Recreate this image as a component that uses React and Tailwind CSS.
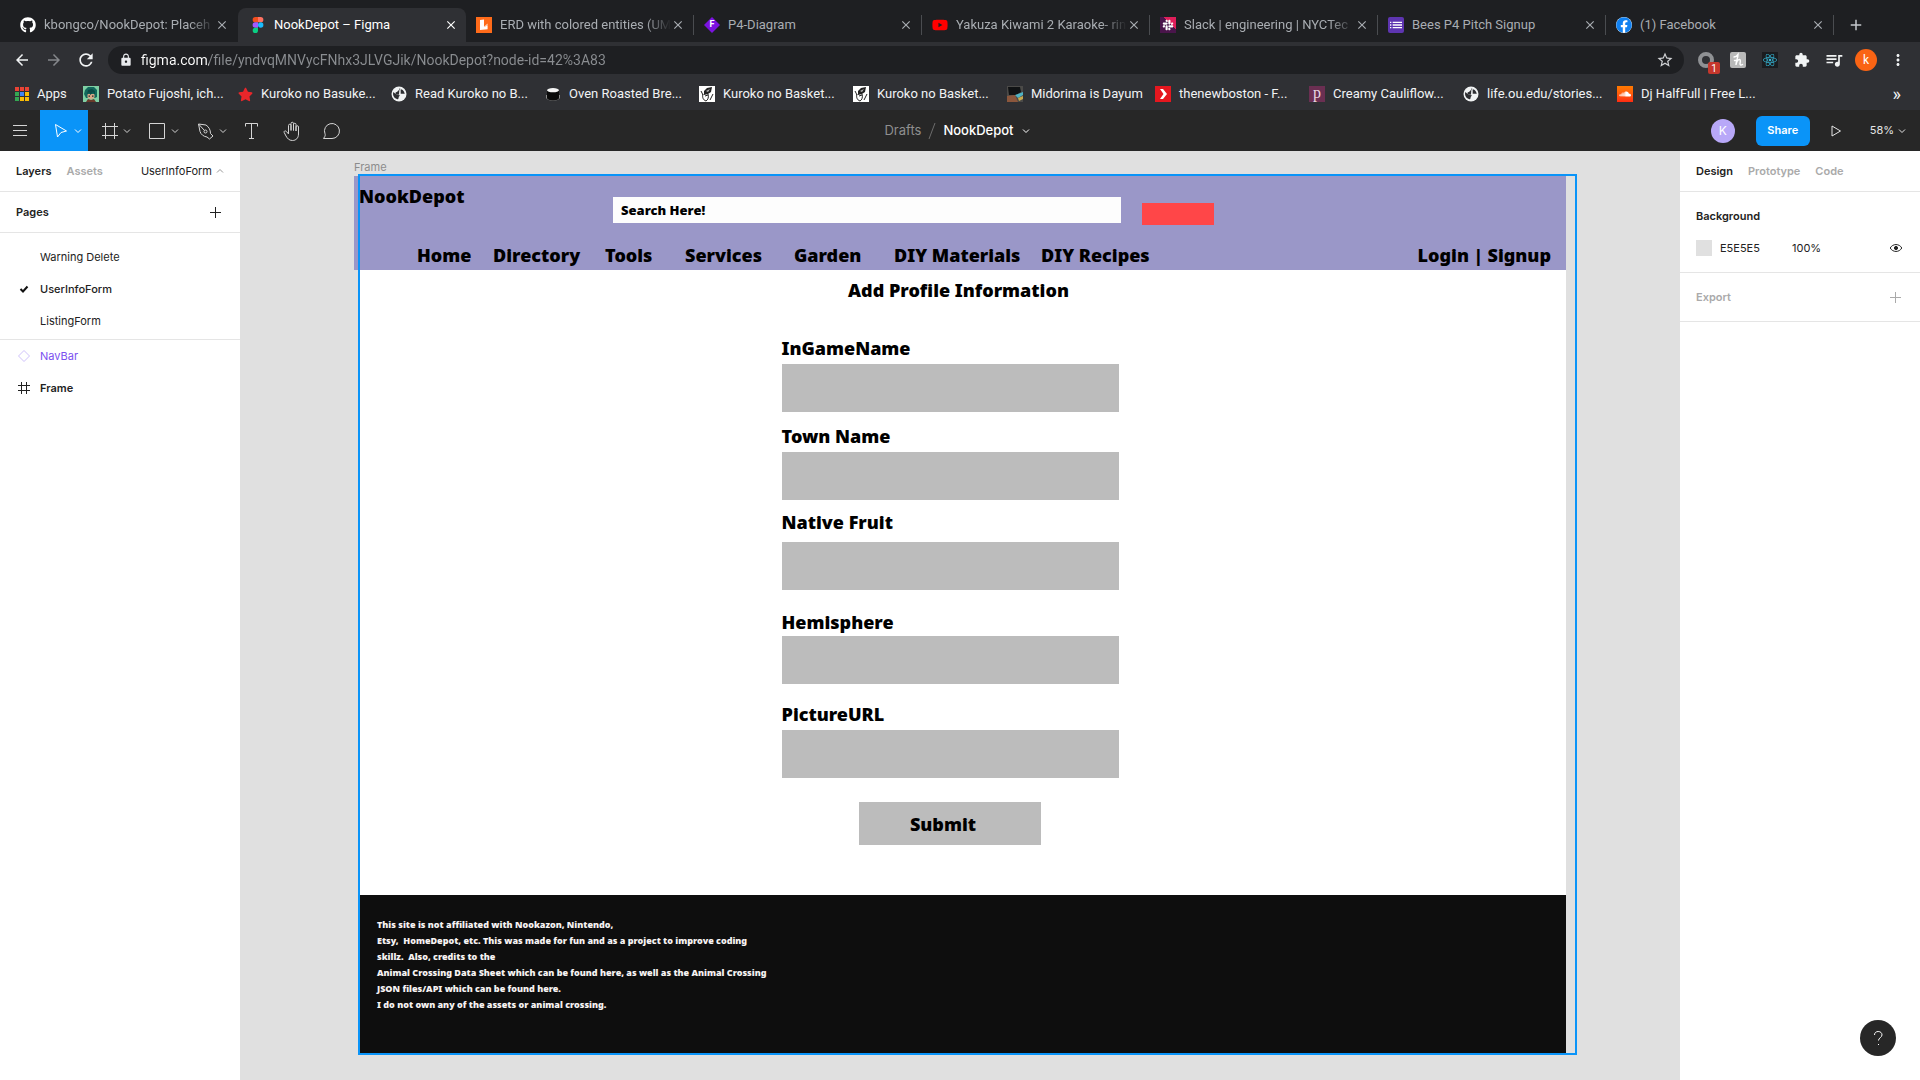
import React from "react";
import { FaGithub, FaYoutube, FaReact, FaSoundcloud, FaFacebook, FaStar, FaSlack } from "react-icons/fa";
import {
  MdArrowBack, MdArrowForward, MdRefresh, MdLock, MdStarBorder, MdExtension, MdQueueMusic,
  MdMoreVert, MdClose, MdAdd, MdList,
} from "react-icons/md";

/* ---------- favicons ---------- */

const FigmaLogo = () => (
  <svg viewBox="0 0 16 16" className="size-4">
    <path d="M5.3 0H8v5.3H5.3a2.65 2.65 0 0 1 0-5.3z" fill="#f24e1e" />
    <path d="M8 0h2.7a2.65 2.65 0 0 1 0 5.3H8z" fill="#ff7262" />
    <path d="M5.3 5.3H8v5.4H5.3a2.7 2.7 0 0 1 0-5.4z" fill="#a259ff" />
    <circle cx="10.7" cy="8" r="2.7" fill="#1abcfe" />
    <path d="M5.3 10.7H8v2.6a2.65 2.65 0 1 1-2.7-2.6z" fill="#0acf83" />
  </svg>
);

const LucidLogo = () => (
  <svg viewBox="0 0 16 16" className="size-4">
    <path d="M0 0h16v16H0z" fill="#ff6b1a" />
    <path d="M4 3l4-.4v6.8l3.6-.6v3.4L4 13z" fill="#fff" />
    <path d="M8 9.4l3.6-3v2.400z" fill="#ffd2b5" />
  </svg>
);

const DiagramLogo = () => (
  <span className="relative flex size-4 items-center justify-center">
    <svg viewBox="0 0 16 16" className="absolute inset-0">
      <path d="M8 0l8 8-8 8-8-8z" fill="#7b12e0" />
    </svg>
    <span className="relative text-[9px] font-bold text-white">F</span>
  </span>
);

const SlackLogo = () => (
  <span className="flex size-4 items-center justify-center bg-[linear-gradient(45deg,#4a154b_62%,#e01e5a_62%)]">
    <FaSlack className="size-3 text-white" />
  </span>
);

const FormsLogo = () => (
  <span className="flex size-4 items-center justify-center rounded-xs bg-[#5e35b1]">
    <MdList className="size-4 text-white" />
  </span>
);

const FacebookLogo = () => (
  <span className="flex size-4 rounded-full bg-white">
    <FaFacebook className="size-4 text-[#1080f0]" />
  </span>
);

const AppsGrid = () => {
  const colors = ["#ea4335", "#ea4335", "#ea4335", "#34a853", "#4285f4", "#fbbc04", "#34a853", "#fbbc04", "#fbbc04"];
  return (
    <svg viewBox="0 0 14 14" className="size-3.5">
      {colors.map((c, i) => (
        <rect key={i} x={(i % 3) * 5} y={Math.floor(i / 3) * 5} width="4" height="4" fill={c} />
      ))}
    </svg>
  );
};

const Globe = () => (
  <svg viewBox="0 0 16 16" className="size-4">
    <circle cx="8" cy="8" r="7.500" fill="#f1f3f4" />
    <path
      d="M8.500 2.200c1.500.3 1.200 1.600-.3 1.900-1.600.3-1 1.700-2.400 2-1.300.3-1.700 1.200-1 1.900.9.700 3-.2 3.700 1.100.5 1-.8 1.500-.9 2.600 0 .9-.4 1.700-1.100 1.600C4 12.800 2 10.600 2 8c0-.700.200-1.300.400-1.900L4.600 8c1.500.5 3.100.2 3.300 1.500M10.300 3.200c-.3 1-1.300 1.500-.6 2.300.8.700-.8 1.400 0 2 1 .700 2.300-.2 3.900.6 0-2.200-1.300-4.100-3.300-4.900z"
      fill="#2d2e32"
    />
  </svg>
);

const Anime = () => (
  <svg viewBox="0 0 16 16" className="size-4">
    <path d="M0 0h16v16H0z" fill="#7fd0a4" />
    <path d="M1 8l1-4 3-3h6l3 3v7l-2 1H3z" fill="#12695c" />
    <path d="M4.500 8h7v3.500l-3.500 2-3.500-2z" fill="#d9a988" />
    <path d="M4 9l2-3 1.500 3L10 6l2 3V5L9 3 5 4z" fill="#0c4b46" />
    <path d="M5.500 9.500h1.500v1.300H5.500zM9 9.500h1.500v1.300H9z" fill="#1c2b28" />
    <path d="M3 16l2-3 3 1 3-1 2 3z" fill="#6a3a2a" />
  </svg>
);

const Pot = () => (
  <svg viewBox="0 0 16 16" className="size-4">
    <path d="M1 9h14v2.500a7 3.200 0 0 1-14 0z" fill="#8c8c8c" />
    <path d="M2 4h12v8a6 2.500 0 0 1-12 0z" fill="#0a0a0a" />
    <ellipse cx="8" cy="4.200" rx="6" ry="2.100" fill="#f5f5f5" />
  </svg>
);

const Sketch = () => (
  <svg viewBox="0 0 16 16" className="size-4">
    <path d="M0 0h16v16H0z" fill="#fff" />
    <path d="M5 5l3-3 5-1-1 5-3 2-4 1z" fill="#222" />
    <path d="M7 5l4-2-2 3z" fill="#bbb" />
    <path d="M4 8c-1 3 0 6 3 7 2-1 3-4 2-7M6 10l3-1M2 5l2 4M14 8l-3 6" stroke="#222" strokeWidth="1" fill="none" />
  </svg>
);

const Photo = () => (
  <svg viewBox="0 0 16 16" className="size-4">
    <path d="M0 0h16v16H0z" fill="#4b4a48" />
    <path d="M1 1h12l1 5-5 3H2z" fill="#101214" />
    <path d="M0 10l8-1 3 7H0z" fill="#8b563c" />
    <path d="M8 9l8-3v3l-5 3z" fill="#4fb3c4" />
    <path d="M11 12l5-2v3l-4 2z" fill="#c7a94e" />
  </svg>
);

const Boston = () => (
  <svg viewBox="0 0 16 16" className="size-4">
    <path d="M0 0h16v16H0z" fill="#e5171f" />
    <path d="M5 3h3l4 5-4 5H5l3.500-5z" fill="#fff" />
  </svg>
);

const Pinch = () => (
  <span className="flex size-4 items-center justify-center bg-[#6b2f52] pb-0.5 font-['Liberation_Serif',serif] text-base leading-4 text-[#e9d7e2]">
    p
  </span>
);

const Cloud = () => (
  <span className="flex size-4 items-center justify-center bg-gradient-to-b from-[#ff7a00] to-[#ff2a12]">
    <FaSoundcloud className="size-3 text-white" />
  </span>
);

/* ---------- browser chrome ---------- */

const tabs = [
  { title: "kbongco/NookDepot: Placeh", icon: <FaGithub className="size-4 text-white" />, fade: true },
  { title: "NookDepot – Figma", icon: <FigmaLogo />, active: true },
  { title: "ERD with colored entities (UM", icon: <LucidLogo />, fade: true },
  { title: "P4-Diagram", icon: <DiagramLogo /> },
  { title: "Yakuza Kiwami 2 Karaoke- rin", icon: <FaYoutube className="size-4 text-[#ff0000]" />, fade: true },
  { title: "Slack | engineering | NYCTec", icon: <SlackLogo />, fade: true },
  { title: "Bees P4 Pitch Signup", icon: <FormsLogo /> },
  { title: "(1) Facebook", icon: <FacebookLogo /> },
];

function TabStrip() {
  return (
    <div className="flex h-[42px] items-end bg-[#1e1f22] pl-2.5">
      <div role="tablist" className="flex min-w-0">
        {tabs.map((t, i) => (
          <div
            key={t.title}
            role="tab"
            aria-selected={!!t.active}
            className={
              t.active
                ? "flex h-[34px] w-[228px] min-w-0 items-center rounded-t-lg bg-[#2f3034] pr-2 pl-3 text-white"
                : "flex h-[34px] w-[228px] min-w-0 items-center pl-2.5 text-[#a9adb2]"
            }
          >
            <span className="shrink-0">{t.icon}</span>
            <span
              className={
                t.fade
                  ? "ml-2 min-w-0 flex-1 overflow-hidden whitespace-nowrap [mask-image:linear-gradient(to_right,black_85%,transparent)]"
                  : "ml-2 min-w-0 flex-1 overflow-hidden whitespace-nowrap"
              }
            >
              {t.title}
            </span>
            <button aria-label="Close tab" className="shrink-0">
              <MdClose className="size-3.5" />
            </button>
            {!t.active && (
              <span className={i === 0 ? "ml-2 h-5 w-px shrink-0" : "ml-2 h-5 w-px shrink-0 bg-[#4a4c50]"} />
            )}
          </div>
        ))}
      </div>
      <button aria-label="New tab" className="flex h-[34px] w-11 items-center justify-center text-[#c4c7cb]">
        <MdAdd className="size-[18px]" />
      </button>
    </div>
  );
}

function ChromeButton({ label, children, className }) {
  return (
    <button aria-label={label} className={"relative flex w-8 shrink-0 items-center justify-center " + (className || "text-[#f1f3f4]")}>
      {children}
    </button>
  );
}

function AddressBar() {
  return (
    <div className="flex h-9 items-center bg-[#2f3034] px-1.5">
      <ChromeButton label="Back"><MdArrowBack className="size-[18px]" /></ChromeButton>
      <ChromeButton label="Forward" className="text-[#85878b]"><MdArrowForward className="size-[18px]" /></ChromeButton>
      <ChromeButton label="Reload"><MdRefresh className="size-5" /></ChromeButton>
      <div className="mx-1.5 flex h-7 min-w-0 flex-1 items-center rounded-full bg-[#1e1f22] pr-2.5 pl-[11px]">
        <MdLock className="size-3.5 shrink-0 text-[#e8eaed]" />
        <input
          aria-label="Address"
          defaultValue="figma.com/file/yndvqMNVycFNhx3JLVGJik/NookDepot?node-id=42%3A83"
          className="ml-2 min-w-0 flex-1 bg-[linear-gradient(to_right,#ffffff_68px,#8a8d91_68px)] bg-clip-text text-sm text-transparent outline-none"
        />
        <button aria-label="Bookmark this tab" className="text-[#d0d2d5]"><MdStarBorder className="size-[18px]" /></button>
      </div>
      <ChromeButton label="Blocker">
        <span className="size-4 rounded-full border-4 border-[#8f9194]" />
        <span className="absolute top-2.5 left-[18px] flex h-3 w-3 items-center justify-center rounded-xs bg-[#c5372c] text-[10px] text-white">1</span>
      </ChromeButton>
      <ChromeButton label="Honey">
        <span className="flex size-4 items-center justify-center rounded-xs bg-[#b9b9b9]">
          <svg viewBox="0 0 16 16" className="size-4" fill="none" stroke="#fff" strokeWidth="1.400" strokeLinecap="round">
            <path d="M4 5c1 0 3-1 4-2.500C8 6 6 9 6 13c.5-3 2-5.500 3.500-5.500S10 11 10 12s1 1.500 2.500.5M4.500 8.500h3" />
          </svg>
        </span>
      </ChromeButton>
      <ChromeButton label="React tools">
        <span className="flex size-4 items-center justify-center bg-[#1b1c1f]"><FaReact className="size-3.5 text-[#36b8d8]" /></span>
      </ChromeButton>
      <ChromeButton label="Extensions"><MdExtension className="size-4" /></ChromeButton>
      <ChromeButton label="Media"><MdQueueMusic className="size-5" /></ChromeButton>
      <ChromeButton label="Profile">
        <span className="flex size-[22px] items-center justify-center rounded-full bg-[#fa6414] text-xs text-white">k</span>
      </ChromeButton>
      <ChromeButton label="Menu"><MdMoreVert className="size-[18px]" /></ChromeButton>
    </div>
  );
}

const bookmarks = [
  ["Potato Fujoshi, ich...", <Anime />],
  ["Kuroko no Basuke...", <FaStar className="size-[15px] text-[#e8262a]" />],
  ["Read Kuroko no B...", <Globe />],
  ["Oven Roasted Bre...", <Pot />],
  ["Kuroko no Basket...", <Sketch />],
  ["Kuroko no Basket... ", <Sketch />],
  ["Midorima is Dayum", <Photo />, "w-[148px]"],
  ["thenewboston - F...", <Boston />],
  ["Creamy Cauliflow...", <Pinch />],
  ["life.ou.edu/stories...", <Globe />],
  ["Dj HalfFull | Free L...", <Cloud />],
];

function Bookmarks() {
  return (
    <div className="flex h-8 items-center bg-[#2f3034] pr-[19px] pl-[15px] text-[#f1f3f4]">
      <a href="#apps" className="flex w-[68px] shrink-0 items-center gap-2 whitespace-nowrap"><AppsGrid />Apps</a>
      <div className="flex min-w-0 flex-1 overflow-hidden">
        {bookmarks.map(([label, icon, w]) => (
          <a key={label} href="#bookmark" className={"flex shrink-0 items-center whitespace-nowrap " + (w || "w-[154px]")}>
            <span className="mr-2 flex size-4 shrink-0 items-center justify-center">{icon}</span>
            {label}
          </a>
        ))}
      </div>
      <button aria-label="More bookmarks" className="text-lg leading-4">»</button>
    </div>
  );
}

/* ---------- editor toolbar ---------- */

const Chevron = ({ up, className }) => (
  <svg viewBox="0 0 8 8" className={"size-2 " + (className || "")} fill="none" stroke="currentColor">
    <path d={up ? "M1 5.500l3-3 3 3" : "M1 2.500l3 3 3-3"} />
  </svg>
);

function Tool({ label, active, chevron, children }) {
  return (
    <button
      aria-label={label}
      className={
        active
          ? "flex h-full w-12 items-center bg-[#0a94f8] pl-[11px] text-white"
          : chevron
            ? "flex h-full w-12 items-center pl-3 text-[#d5d5d5]"
            : "flex h-full w-10 items-center justify-center text-[#d5d5d5]"
      }
    >
      <svg viewBox="0 0 20 20" className="size-5" fill="none" stroke="currentColor">{children}</svg>
      {chevron && <Chevron className="ml-[3px]" />}
    </button>
  );
}

function EditorBar() {
  return (
    <header className="flex h-[41px] items-center bg-[#272727] font-[Inter,sans-serif]">
      <div className="flex h-full flex-1 items-center">
        <Tool label="Main menu"><path d="M3 4.500h14M3 9.500h14M3 14.500h14" /></Tool>
        <Tool label="Move" active chevron><path d="M4.500 3.500l11 6.500-5.500 1.500-3.500 4.500z" /></Tool>
        <Tool label="Frame" chevron><path d="M5.500 2v16M14.500 2v16M2 5.500h16M2 14.500h16" /></Tool>
        <Tool label="Rectangle" chevron><path d="M1.500 2.500h15v15h-15z" /></Tool>
        <Tool label="Pen" chevron>
          <path d="M2.500 3l7.500 1c3 2 4.500 5 4.500 8.500l2.500 2.500-3.500 3-2.500-2c-3.500-.5-6-2.500-7-5.500zM2.500 3l6 6.500" />
          <circle cx="9.500" cy="10.500" r="1.500" />
        </Tool>
        <Tool label="Text"><path d="M3.500 5.500v-3h12v3M9.500 2.500v15M7 17.500h5" /></Tool>
        <Tool label="Hand">
          <path d="M6.500 11V4.500a1.250 1.250 0 0 1 2.500 0V9.500V2.500a1.250 1.250 0 0 1 2.500 0V9.500V3.500a1.250 1.250 0 0 1 2.500 0V10V6a1.250 1.250 0 0 1 2.500 0v7c0 4-2.500 6.500-6 6.500-3.500 0-5-2-6.500-4.500L2.200 11.500c-.6-1.300 1-2.200 2-1.200l2.300 2.600z" />
        </Tool>
        <Tool label="Comment"><path d="M1.500 17.500h8.500a7.500 7.500 0 1 0-7-4.700c.4 1 .2 2-.3 2.900z" /></Tool>
      </div>
      <div className="flex items-center pl-2 text-[13px] whitespace-nowrap text-white">
        <span className="text-[#8f8f8f]">Drafts</span>
        <svg viewBox="0 0 8 16" className="mx-[7px] h-4 w-2" stroke="#6d6d6d"><path d="M7 0L1 16" /></svg>
        <button className="flex items-center gap-2 font-medium">NookDepot<Chevron /></button>
      </div>
      <div className="flex flex-1 items-center justify-end pr-[14px] text-[#e5e5e5]">
        <span className="flex size-6 items-center justify-center rounded-full bg-[#b8a8f8] text-xs text-white">K</span>
        <button className="ml-[21px] h-[30px] w-[54px] rounded-md bg-[#0a94f8] text-[11px] font-semibold text-white">Share</button>
        <button aria-label="Present" className="ml-4 flex w-5 justify-center">
          <svg viewBox="0 0 12 12" className="size-3" fill="none" stroke="currentColor"><path d="M2 1l8.500 5L2 11z" /></svg>
        </button>
        <button className="ml-6 flex items-center gap-1 text-[11px]">58%<Chevron /></button>
      </div>
    </header>
  );
}

/* ---------- side panels ---------- */

const Plus = () => (
  <svg viewBox="0 0 12 12" className="size-3" stroke="currentColor"><path d="M6.500 1v11M1 6.500h11" /></svg>
);

function LayersPanel() {
  return (
    <aside className="w-60 shrink-0 bg-white">
      <div className="flex h-[41px] items-center border-b border-[#e5e5e5] px-4">
        <button className="font-semibold">Layers</button>
        <button className="ml-[15px] font-semibold text-[#aaaaaa]">Assets</button>
        <button className="ml-auto flex items-center gap-1">UserInfoForm<Chevron up className="text-[#999999]" /></button>
      </div>
      <div className="flex h-[41px] items-center justify-between border-b border-[#e5e5e5] pr-[19px] pl-4">
        <h2 className="font-semibold">Pages</h2>
        <button aria-label="Add page"><Plus /></button>
      </div>
      <ul className="border-b border-[#e5e5e5] pt-2 pb-0.5">
        <li className="flex h-8 items-center pl-10">Warning Delete</li>
        <li className="flex h-8 items-center pl-4 font-medium">
          <svg viewBox="0 0 16 16" className="mr-2 size-4" fill="none" stroke="#111" strokeWidth="2"><path d="M4.500 8l2.500 2.500L11.500 5.500" /></svg>
          UserInfoForm
        </li>
        <li className="flex h-8 items-center pl-10">ListingForm</li>
      </ul>
      <ul>
        <li className="flex h-8 items-center pl-4 text-[#7b50f0]">
          <svg viewBox="0 0 16 16" className="mr-2 size-4" fill="none" stroke="#cfc2fb"><path d="M8 2.500L13.500 8 8 13.500 2.500 8z" /></svg>
          NavBar
        </li>
        <li className="flex h-8 items-center pl-4 font-semibold">
          <svg viewBox="0 0 16 16" className="mr-2 size-4" stroke="#222"><path d="M5.500 2v12M10.500 2v12M2 5.500h12M2 10.500h12" /></svg>
          Frame
        </li>
      </ul>
    </aside>
  );
}

function DesignPanel() {
  return (
    <aside className="w-60 shrink-0 bg-white">
      <div className="flex h-[41px] items-center gap-[15px] border-b border-[#e5e5e5] px-4 font-semibold text-[#aaaaaa]">
        <button className="text-[#222222]">Design</button>
        <button>Prototype</button>
        <button>Code</button>
      </div>
      <div className="border-b border-[#e5e5e5] pt-2 pb-2">
        <h2 className="flex h-8 items-center pl-4 font-semibold">Background</h2>
        <div className="flex h-8 items-center pr-4 pl-4">
          <span className="size-4 bg-[#e0e0e0]" />
          <span className="ml-2 w-[72px]">E5E5E5</span>
          <span>100%</span>
          <button aria-label="Toggle visibility" className="ml-auto">
            <svg viewBox="0 0 16 16" className="size-4" fill="none" stroke="#222">
              <path d="M2.200 8c2.600-4.600 9-4.600 11.600 0-2.600 4.600-9 4.600-11.600 0z" />
              <circle cx="8" cy="8" r="1.600" fill="#222" />
            </svg>
          </button>
        </div>
      </div>
      <div className="flex h-[49px] items-center justify-between border-b border-[#e5e5e5] pr-[19px] pl-4 text-[#aaaaaa]">
        <h2 className="font-semibold">Export</h2>
        <button aria-label="Add export"><Plus /></button>
      </div>
    </aside>
  );
}

/* ---------- canvas ---------- */

const nav = [
  ["Home", "w-[76px]"],
  ["Directory", "w-28"],
  ["Tools", "w-20"],
  ["Services", "w-[109px]"],
  ["Garden", "w-[100px]"],
  ["DIY Materials", "w-[147px]"],
  ["DIY Recipes", "w-32"],
];

const fields = [
  ["InGameName", "mt-8", "mt-1"],
  ["Town Name", "mt-3", "mt-1"],
  ["Native Fruit", "mt-2.5", "mt-2"],
  ["Hemisphere", "mt-5", "mt-0.5"],
  ["PictureURL", "mt-[18px]", "mt-1"],
];

function Artboard() {
  return (
    <div className="relative mr-[114px] ml-[114px] font-['Noto_Sans',sans-serif] text-lg leading-6 font-black text-black">
      <div className="h-[94px] bg-[#9a97c8]">
        <div className="flex h-[67px] items-start">
          <h1 className="mt-2 w-[259px] pl-[5px]">NookDepot</h1>
          <input
            aria-label="Search"
            defaultValue="Search Here!"
            className="mt-[21px] h-[26px] w-[508px] min-w-0 bg-[#fdfdfd] px-2 text-[13px] outline-none"
          />
          <button aria-label="Search" className="mt-[27px] ml-[21px] h-[22px] w-[72px] shrink-0 bg-[#ff4648]" />
        </div>
        <nav className="flex pr-[15px] pl-[63px] whitespace-nowrap">
          {nav.map(([label, w]) => (
            <a key={label} href="#nav" className={w}>{label}</a>
          ))}
          <a href="#login" className="ml-auto">Login | Signup</a>
        </nav>
      </div>
      <form className="ml-1.5 bg-white pb-[50px]" onSubmit={(e) => e.preventDefault()}>
        <h2 className="pt-2 pr-[9px] pb-0.5 text-center">Add Profile Information</h2>
        <div className="mx-auto flex w-[363px] flex-col pr-[26px]">
          {fields.map(([label, top, gap]) => (
            <React.Fragment key={label}>
              <label htmlFor={label} className={top}>{label}</label>
              <input id={label} className={"h-12 w-full bg-[#bcbcbc] px-2 outline-none " + gap} />
            </React.Fragment>
          ))}
          <button className="mx-auto mt-6 h-[43px] w-[182px] bg-[#bcbcbc] pr-[14px]">Submit</button>
        </div>
      </form>
      <footer className="ml-1.5 h-[158px] bg-[#0e0e0e] pt-[22px] pl-[17px] text-[9px] leading-4 text-[#f6f2f2]">
        <p className="w-[400px] whitespace-pre">
          {"This site is not affiliated with Nookazon, Nintendo,\nEtsy,  HomeDepot, etc. This was made for fun and as a project to improve coding\nskillz.  Also, credits to the\nAnimal Crossing Data Sheet which can be found here, as well as the Animal Crossing\nJSON files/API which can be found here.\nI do not own any of the assets or animal crossing."}
        </p>
      </footer>
      <div className="pointer-events-none absolute -top-0.5 -right-[11px] -bottom-0.5 left-1 border-2 border-[#0a94f8]" />
    </div>
  );
}

export default function App() {
  return (
    <div className="flex min-h-screen flex-col bg-[#e0e0e0] font-[Roboto,sans-serif] text-[13px]">
      <TabStrip />
      <AddressBar />
      <Bookmarks />
      <EditorBar />
      <div className="flex flex-1 font-[Inter,sans-serif] text-[11px] text-[#222222]">
        <LayersPanel />
        <main className="min-w-0 flex-1">
          <p className="ml-[114px] h-[25px] pt-2 leading-4 text-[#8c8c8c]">Frame</p>
          <Artboard />
        </main>
        <DesignPanel />
      </div>
      <button aria-label="Help" className="fixed right-6 bottom-6 flex size-9 items-center justify-center rounded-full bg-[#272727] text-white">
        <svg viewBox="0 0 16 16" className="size-4" fill="none" stroke="currentColor">
          <path d="M4.500 5c0-2.200 1.500-3.500 3.700-3.500S12 2.900 12 4.900c0 2.600-3.500 2.900-3.500 5.600M8 14.500h1" />
        </svg>
      </button>
    </div>
  );
}
